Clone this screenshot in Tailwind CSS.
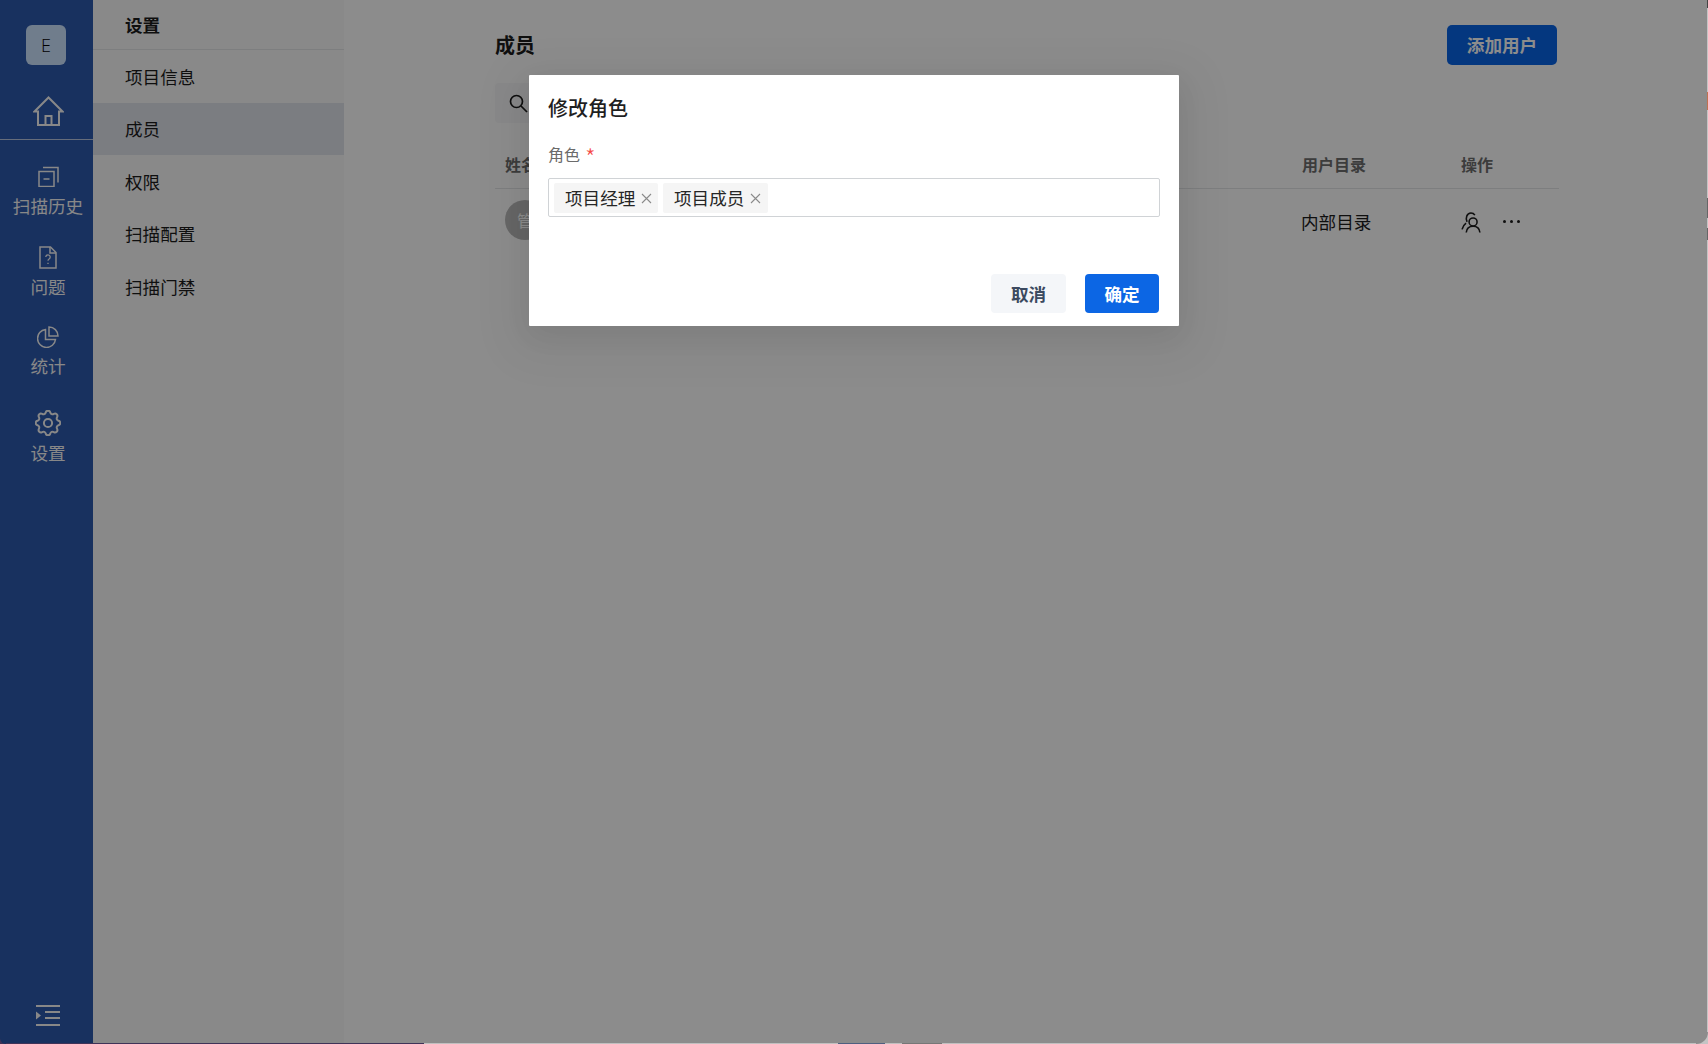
<!doctype html>
<html lang="zh-CN">
<head>
<meta charset="utf-8">
<title>修改角色</title>
<script src="https://cdn.jsdelivr.net/npm/@tailwindcss/browser@4"></script>
</head>
<body class="bg-white">
<div class="relative flex h-[1044px] w-[1708px] overflow-hidden bg-white font-['Noto_Sans_CJK_SC','Noto_Sans',sans-serif] text-[#1c1c1c]">
  <!-- icon rail -->
  <aside class="flex h-full w-[93px] shrink-0 flex-col bg-[#2c59ad] text-[17.600px] leading-[26px] text-[#f7f7f7]">
    <div class="ml-[26px] mt-[25px] flex h-10 w-10 items-center justify-center rounded-md bg-[#cce3ff] font-['Open_Sans'] text-[18px] font-light text-black">E</div>
    <div class="flex h-[75px] w-full items-start justify-center border-b border-[#f7f7f7]/70 pt-[31px] pl-[3px]">
      <svg class="h-[31px] w-[31px]" viewBox="0 0 31 31" fill="none" stroke="currentColor" stroke-width="2"><path d="M1.500 15.500 15.500 1.500 29.500 15.500h-3.500V29H5V15.500z"/><path d="M12.500 29v-9h6v9"/></svg>
    </div>
    <div class="flex h-[79px] w-[96px] flex-col items-center pt-[26px]">
      <svg class="h-[21px] w-[21px] shrink-0" viewBox="0 0 21 21" fill="none" stroke="currentColor" stroke-width="1.500"><path d="M1 5.500h15v15H1zM5 1.500h15v15M5.500 13h6"/></svg>
      <span class="mt-[6px] whitespace-nowrap">扫描历史</span>
    </div>
    <div class="flex h-[80px] w-[96px] flex-col items-center pt-[27px]">
      <svg class="h-[23px] w-[18px] shrink-0" viewBox="0 0 18 23" fill="none" stroke="currentColor" stroke-width="1.500"><path d="M1 1h10.500L17 6.500V22H1z"/><path d="M11 1v6h6"/><path d="M6.800 11a2.200 2.200 0 1 1 3.300 2c-.8.500-1.100 1-1.100 1.800" stroke-width="1.300"/><path d="M9 16.800v1.200" stroke-width="1.300"/></svg>
      <span class="mt-[5px] whitespace-nowrap">问题</span>
    </div>
    <div class="flex h-[80px] w-[96px] flex-col items-center pt-[27px]">
      <svg class="h-[22px] w-[22px] shrink-0" viewBox="0 0 22 22" fill="none" stroke="currentColor" stroke-width="1.500"><path d="M8.500 3.500a9 9 0 1 0 10 10h-10z"/><path d="M12 1a9 9 0 0 1 9 9h-9z"/></svg>
      <span class="mt-[5px] whitespace-nowrap">统计</span>
    </div>
    <div class="flex h-[80px] w-[96px] flex-col items-center pt-[31px]">
      <svg class="h-[26px] w-[26px] shrink-0" viewBox="2.500 2.500 19 19" fill="none" stroke="currentColor" stroke-width="1.450"><path d="M10.325 4.317c.426-1.756 2.924-1.756 3.350 0a1.724 1.724 0 0 0 2.573 1.066c1.543-.940 3.310.826 2.370 2.370a1.724 1.724 0 0 0 1.065 2.572c1.756.426 1.756 2.924 0 3.350a1.724 1.724 0 0 0-1.066 2.573c.940 1.543-.826 3.310-2.370 2.370a1.724 1.724 0 0 0-2.572 1.065c-.426 1.756-2.924 1.756-3.350 0a1.724 1.724 0 0 0-2.573-1.066c-1.543.940-3.310-.826-2.370-2.370a1.724 1.724 0 0 0-1.065-2.572c-1.756-.426-1.756-2.924 0-3.350a1.724 1.724 0 0 0 1.066-2.573c-.940-1.543.826-3.310 2.370-2.370.996.608 2.296.070 2.572-1.065z"/><circle cx="12" cy="12" r="3"/></svg>
      <span class="mt-[4px] whitespace-nowrap">设置</span>
    </div>
    <div class="mt-auto mb-[18px] ml-[36px]">
      <svg class="block h-[21px] w-[24px]" viewBox="0 0 24 21" fill="currentColor"><path d="M0 0h24v2H0zM9 6h15v2H9zM9 12h15v2H9zM0 19h24v2H0zM0 6.500l5 4-5 4z"/></svg>
    </div>
  </aside>

  <!-- settings nav -->
  <nav class="flex h-full w-[251px] shrink-0 flex-col bg-[#f9fafa] text-[17.600px]">
    <div class="flex h-[50px] items-center border-b border-[#e4e5e7] pt-[2px] pl-[32px] font-bold">设置</div>
    <a class="flex h-[53px] items-center pt-[2px] pl-[32px]">项目信息</a>
    <a class="flex h-[52px] items-center bg-[#e1e3ec] pl-[32px]">成员</a>
    <a class="flex h-[53px] items-center pt-[2px] pl-[32px]">权限</a>
    <a class="flex h-[52px] items-center pl-[32px]">扫描配置</a>
    <a class="flex h-[53px] items-center pt-[2px] pl-[32px]">扫描门禁</a>
  </nav>

  <!-- main -->
  <main class="ml-[151px] w-[1064px] shrink-0">
    <header class="mt-[25px] flex h-10 w-[1062px] items-center justify-between">
      <h1 class="text-[20px] font-bold">成员</h1>
      <button class="h-10 w-[110px] rounded-[5px] bg-[#0964e7] text-[17.600px] font-bold text-white">添加用户</button>
    </header>
    <div class="mt-[18px] flex h-10 w-[360px] items-center rounded-[4px] bg-[#f8f8f9] pl-[14px]">
      <svg class="h-[19px] w-[19px]" viewBox="0 0 19 19" fill="none" stroke="#1c1c1c" stroke-width="1.700"><circle cx="7.500" cy="7.500" r="6"/><path d="m12 12 6 6"/></svg>
    </div>
    <div class="mt-[19px] flex h-[47px] items-center border-b border-[#e4e5e7] pb-[3px] text-[16px] font-bold text-[#6e6e6e]">
      <span class="w-[807px] pl-[10px]">姓名</span>
      <span class="w-[159px]">用户目录</span>
      <span>操作</span>
    </div>
    <div class="flex h-[61px] items-center text-[17.600px]">
      <div class="ml-[10px] flex h-10 w-10 items-center justify-center rounded-full bg-[#bbbbbb] text-[16px] text-white">管</div>
      <span class="ml-[756px] w-[160px] pt-[5px]">内部目录</span>
      <svg class="mt-[6px] h-[21px] w-[21px]" viewBox="0 0 20 20" fill="none" stroke="#1c1c1c" stroke-width="1.500"><circle cx="11.500" cy="9.500" r="3.800"/><path d="M5 19.500c.3-3.800 3-6 6.500-6s6.200 2.200 6.500 6"/><path d="M5.800 9.500C4 6 5.500 1 9.500 1c1.700 0 2.900.7 3.700 2M4.800 10.500C2.800 12 1.500 14 1 16.500"/></svg>
      <div class="ml-[21px] mt-[3px] flex gap-[4px]"><i class="block h-[3px] w-[3px] rounded-full bg-[#1c1c1c]"></i><i class="block h-[3px] w-[3px] rounded-full bg-[#1c1c1c]"></i><i class="block h-[3px] w-[3px] rounded-full bg-[#1c1c1c]"></i></div>
    </div>
  </main>

  <!-- overlay + dialog -->
  <div class="absolute inset-0 flex justify-center bg-black/45">
    <section class="mt-[75px] h-[251px] w-[650px] rounded-[1px] bg-white px-[19px] shadow-[0_12px_48px_16px_rgba(0,0,0,0.05),0_9px_28px_rgba(0,0,0,0.06)]">
      <h2 class="mt-[19px] text-[20px] leading-[28px] font-medium text-[#1f1f1f]">修改角色</h2>
      <div class="mt-[20px] flex h-[24px] items-center gap-[5px] text-[16px] text-[#6b6b6b]">角色 <span class="pt-[5px] text-[24px] leading-none font-light text-[#f54a45]">*</span></div>
      <div class="mt-[12px] flex h-[39px] w-[612px] items-center gap-[5px] rounded-[2px] border border-[#d0d3d6] pl-[5px]">
        <span class="flex h-[30px] w-[104px] items-center gap-[5px] rounded-[2px] bg-[#f5f5f5] pt-[1px] pl-[11px] text-[17.600px] whitespace-nowrap text-[#262626]">项目经理<svg class="ml-[0.500px] h-[11px] w-[11px]" viewBox="0 0 11 11" stroke="#8a8a8a" stroke-width="1.100"><path d="m1 1 9 9M10 1l-9 9"/></svg></span>
        <span class="flex h-[30px] w-[105px] items-center gap-[5px] rounded-[2px] bg-[#f5f5f5] pt-[1px] pl-[11px] text-[17.600px] whitespace-nowrap text-[#262626]">项目成员<svg class="ml-[0.500px] h-[11px] w-[11px]" viewBox="0 0 11 11" stroke="#8a8a8a" stroke-width="1.100"><path d="m1 1 9 9M10 1l-9 9"/></svg></span>
      </div>
      <div class="mt-[57px] flex justify-end gap-[19px] pr-[1px]">
        <button class="h-[39px] w-[75px] rounded-[4px] bg-[#f4f6f9] pt-[1px] text-[17.600px] font-bold text-[#3c4a60]">取消</button>
        <button class="h-[39px] w-[74px] rounded-[4px] bg-[#0c66e4] pt-[1px] text-[17.600px] font-bold text-white">确定</button>
      </div>
    </section>
  </div>

  <!-- window edge: what shows past the screenshot's rounded corners -->
  <div class="absolute right-0 top-0 flex h-[1044px] w-px flex-col bg-[#c4c4c4]">
    <i class="block h-[8px] bg-[#444]"></i>
    <i class="mt-[84px] block h-[18px] bg-[#c07050]"></i>
    <i class="mt-[88px] block h-[20px] bg-[#666]"></i>
    <i class="mt-[10px] block h-[12px] bg-[#666]"></i>
  </div>
  <div class="absolute bottom-0 left-0 flex h-px w-[1708px] bg-[#c0c0c0]">
    <i class="block w-[424px] bg-[#3f3358]"></i>
    <i class="ml-[414px] block w-[47px] bg-[#4e5f80]"></i>
    <i class="ml-[17px] block w-[40px] bg-[#777]"></i>
  </div>
  <div class="absolute bottom-0 right-0 h-[12px] w-[12px] bg-[#c4c4c4]"><div class="h-full w-full rounded-br-[12px] bg-[#8c8c8c]"></div></div>
  <div class="absolute bottom-0 left-0 h-[6px] w-[6px] bg-[#3f3358]"><div class="h-full w-full rounded-bl-[6px] bg-[#18315f]"></div></div>
</div>
</body>
</html>
